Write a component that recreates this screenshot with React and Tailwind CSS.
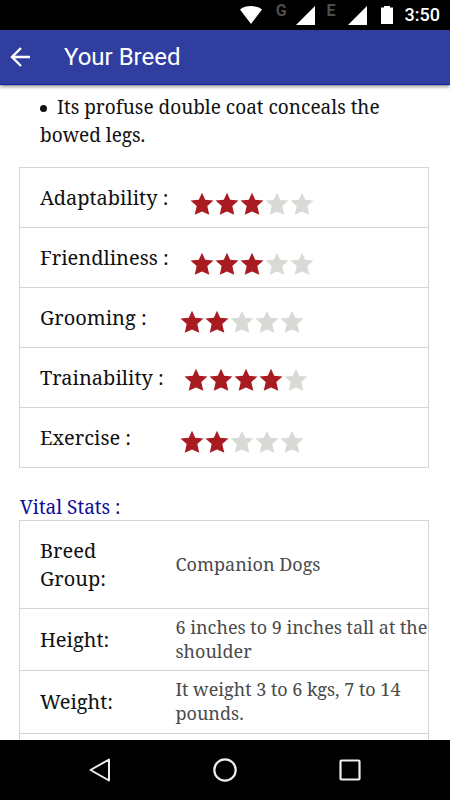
import React from 'react';

const ratings = [
  { label: 'Adaptability :', score: 3, labelClass: 'w-[150px]', starClass: 'pt-3' },
  { label: 'Friendliness :', score: 3, labelClass: 'w-[150px]', starClass: 'pt-3' },
  { label: 'Grooming :', score: 2, labelClass: 'w-[140px]', starClass: 'pt-2' },
  { label: 'Trainability :', score: 4, labelClass: 'w-[144px]', starClass: 'pt-1' },
  { label: 'Exercise :', score: 2, labelClass: 'w-[140px]', starClass: 'pt-2' },
];

const vitals = [
  { label: 'Breed Group:', value: 'Companion Dogs', rowClass: 'h-[88px]' },
  { label: 'Height:', value: '6 inches to 9 inches tall at the shoulder', rowClass: 'h-[62px]' },
  { label: 'Weight:', value: 'It weight 3 to 6 kgs, 7 to 14 pounds.', rowClass: 'h-[63px]' },
];

function Stars({ score }) {
  return (
    <svg
      className="block h-6 w-[125px]"
      viewBox="0 0 125 24"
      role="img"
      aria-label={`${score} out of 5`}
    >
      {[0, 1, 2, 3, 4].map((i) => (
        <path
          key={i}
          transform={`translate(${i * 25} 0)`}
          d="M12 .8l3.200 7 8.300.8-6.200 5.400 2 8.800-7.300-3.300-7.300 3.300 2-8.800L.5 8.600 8.800 7.800z"
          fill={i < score ? '#a81c21' : '#d9d9d5'}
        />
      ))}
    </svg>
  );
}

function StatusBar() {
  return (
    <div className="flex h-[30px] shrink-0 items-center justify-end bg-black pr-[10px] text-white">
      <svg className="h-[18px] w-[22px]" viewBox="0 0 22 18" fill="currentColor" aria-hidden="true">
        <path d="M0 3.4C6.2-1 15.8-1 22 3.4L11 18z" />
      </svg>
      <span className="ml-[14px] self-start text-base leading-[22px] font-bold text-[#4d4d4d]">G</span>
      <svg className="ml-[9px] h-[19px] w-[19px]" viewBox="0 0 19 19" fill="currentColor" aria-hidden="true">
        <path d="M19 0v19H0z" />
      </svg>
      <span className="ml-[12px] self-start text-base leading-[22px] font-bold text-[#4d4d4d]">E</span>
      <svg className="ml-[12px] h-[19px] w-[19px]" viewBox="0 0 19 19" fill="currentColor" aria-hidden="true">
        <path d="M19 0v19H0z" />
      </svg>
      <svg className="ml-[14px] h-[18px] w-[12px]" viewBox="0 0 12 18" fill="currentColor" aria-hidden="true">
        <path d="M3 0h6v1.5h3V18H0V1.5h3z" />
      </svg>
      <span className="ml-[12px] text-lg leading-[30px] font-medium">3:50</span>
    </div>
  );
}

function AppBar() {
  return (
    <header className="z-10 flex h-[55px] shrink-0 items-center border-b border-[#0a2498] bg-[#303f9f] text-white shadow-[0_1px_4px_rgba(0,0,0,0.6)]">
      <button type="button" aria-label="Back" className="ml-2 flex h-6 w-6 items-center justify-center">
        <svg className="h-5 w-5" viewBox="0 0 20 20" fill="none" stroke="currentColor" strokeWidth="2.4" aria-hidden="true">
          <path d="M20 10H2M11 1l-9 9 9 9" />
        </svg>
      </button>
      <h1 className="ml-8 text-2xl">Your Breed</h1>
    </header>
  );
}

function NavBar() {
  return (
    <nav className="flex h-[60px] shrink-0 items-center justify-center gap-[101px] bg-black text-[#eeeeee]">
      <button type="button" aria-label="Back" className="h-6 w-6">
        <svg viewBox="0 0 24 24" fill="none" stroke="currentColor" strokeWidth="2" strokeLinejoin="round" aria-hidden="true">
          <path d="M21 1.5v21L2.5 12z" />
        </svg>
      </button>
      <button type="button" aria-label="Home" className="h-6 w-6">
        <svg viewBox="0 0 24 24" fill="none" stroke="currentColor" strokeWidth="2.2" aria-hidden="true">
          <circle cx="12" cy="12" r="10.7" />
        </svg>
      </button>
      <button type="button" aria-label="Recent apps" className="h-6 w-6">
        <svg viewBox="0 0 24 24" fill="none" stroke="currentColor" strokeWidth="2.2" aria-hidden="true">
          <rect x="2.5" y="2.5" width="19" height="19" rx="1" />
        </svg>
      </button>
    </nav>
  );
}

export default function App() {
  return (
    <div className="flex h-screen flex-col overflow-hidden bg-white font-['Roboto',sans-serif]">
      <StatusBar />
      <AppBar />
      <main className="min-h-0 flex-1 overflow-hidden pt-2 pr-[21px] pl-[19px] font-['Noto_Serif','Liberation_Serif',serif] text-xl leading-7 text-[#111111]">
        <ul className="px-[21px] text-[19px]">
          <li>
            <span className="mr-[10px] inline-block h-[7px] w-[7px] rounded-full bg-[#111111] align-middle" />
            Its profuse double coat conceals the bowed legs.
          </li>
        </ul>

        <table className="mt-[18px] w-full border-collapse border border-[#d4d4d4]">
          <tbody>
            {ratings.map((r) => (
              <tr key={r.label} className="h-[60px] border-b border-[#d4d4d4]">
                <td className="p-0 pl-5">
                  <div className="flex items-center">
                    <span className={r.labelClass}>{r.label}</span>
                    <span className={r.starClass}>
                      <Stars score={r.score} />
                    </span>
                  </div>
                </td>
              </tr>
            ))}
          </tbody>
        </table>

        <h2 className="mt-[27px] mb-px pl-px text-[19px] leading-6 text-[#0d0d9c]">Vital Stats :</h2>
        <table className="w-full table-fixed border-collapse border border-[#d4d4d4]">
          <tbody>
            {vitals.map((v) => (
              <tr key={v.label} className={`${v.rowClass} border-b border-[#d4d4d4]`}>
                <th scope="row" className="w-[156px] p-0 pr-12 pl-5 text-left font-normal">
                  {v.label}
                </th>
                <td className="p-0 pb-0.5 text-lg leading-6 text-[#4a4a4a]">{v.value}</td>
              </tr>
            ))}
            <tr className="h-[62px]">
              <td colSpan={2} />
            </tr>
          </tbody>
        </table>
      </main>
      <NavBar />
    </div>
  );
}
